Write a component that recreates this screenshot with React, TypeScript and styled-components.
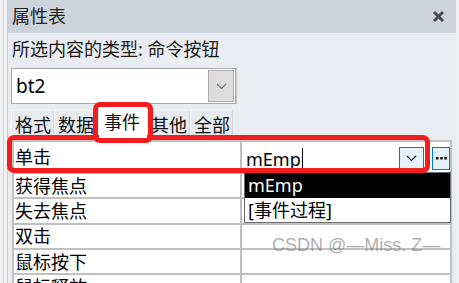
import React from "react";
import styled, { createGlobalStyle, css } from "styled-components";

const GlobalStyle = createGlobalStyle`
  html, body {
    margin: 0;
    padding: 0;
  }
  body {
    width: 459px;
    height: 283px;
    overflow: hidden;
    background: #eef0f3;
    font-family: "Noto Sans", "Noto Sans CJK SC", sans-serif;
    color: #111;
  }
`;

const tabs = ["格式", "数据", "事件", "其他", "全部"];
const events = ["获得焦点", "失去焦点", "双击", "鼠标按下", "鼠标释放"];

const Chevron: React.FC<{ color: string }> = ({ color }) => (
  <svg width="11" height="7" viewBox="0 0 11 7">
    <polyline points="1,1 5.5,5.5 10,1" fill="none" stroke={color} strokeWidth="1.2" />
  </svg>
);

const CloseIcon = () => (
  <svg width="13" height="13" viewBox="0 0 13 13">
    <path d="M2 2 L11 11 M11 2 L2 11" stroke="#4b4b4b" strokeWidth="3" />
  </svg>
);

const Dots = () => (
  <svg width="11" height="3" viewBox="0 0 11 3">
    <rect x="0" y="0" width="2.5" height="2.5" fill="#111" />
    <rect x="4.2" y="0" width="2.5" height="2.5" fill="#111" />
    <rect x="8.4" y="0" width="2.5" height="2.5" fill="#111" />
  </svg>
);

const App = () => {
  return (
    <>
      <GlobalStyle />
      <StyledWindow>
        <StyledEdge />
        <StyledPanel>
          <StyledTitleBar>
            <StyledTitle>属性表</StyledTitle>
            <CloseIcon />
          </StyledTitleBar>
          <StyledBody>
            <StyledTypeLabel>所选内容的类型: 命令按钮</StyledTypeLabel>
            <StyledCombo>
              <StyledComboText>bt2</StyledComboText>
              <StyledComboButton>
                <Chevron color="#707070" />
              </StyledComboButton>
            </StyledCombo>
            <StyledTabs>
              {tabs.map((t) => (
                <StyledTab key={t} $active={t === "事件"}>
                  {t}
                </StyledTab>
              ))}
            </StyledTabs>
            <StyledGrid>
              <StyledRow $selected>
                <StyledName>单击</StyledName>
                <StyledValue $editing>
                  <StyledInput>
                    mEmp
                    <StyledCaret />
                  </StyledInput>
                  <StyledDropButton>
                    <Chevron color="#1a1a1a" />
                  </StyledDropButton>
                  <StyledBuildButton>
                    <Dots />
                  </StyledBuildButton>
                  <StyledList>
                    <StyledOption $active>mEmp</StyledOption>
                    <StyledOption>[事件过程]</StyledOption>
                  </StyledList>
                </StyledValue>
              </StyledRow>
              {events.map((e) => (
                <StyledRow key={e}>
                  <StyledName>{e}</StyledName>
                  <StyledValue />
                </StyledRow>
              ))}
            </StyledGrid>
            <StyledWatermark>CSDN @—Miss. Z—</StyledWatermark>
          </StyledBody>
        </StyledPanel>
      </StyledWindow>
    </>
  );
};

const StyledWindow = styled.div`
  display: flex;
  flex-direction: row;
  width: 459px;
  height: 283px;
`;

const StyledEdge = styled.div`
  width: 8px;
  flex-shrink: 0;
  background: #f1f2f3;
  box-shadow: inset -1px 0 #c6c8cb, inset 3px 0 #f1f2f3, inset 4px 0 #d0d2d5;
`;

const StyledPanel = styled.div`
  display: flex;
  flex-direction: column;
  width: 448px;
  background: #e9ecf0;
`;

const StyledTitleBar = styled.div`
  display: flex;
  flex-direction: row;
  justify-content: space-between;
  align-items: center;
  height: 33px;
  padding: 0 11px 0 4px;
  background: #cdd3db;
`;

const StyledTitle = styled.span`
  font-size: 18px;
  line-height: 33px;
  color: #222;
`;

const StyledBody = styled.div`
  position: relative;
  display: flex;
  flex-direction: column;
  padding-top: 3px;
`;

const StyledTypeLabel = styled.div`
  height: 26px;
  padding-left: 4px;
  font-size: 18px;
  line-height: 26px;
  color: #1a1a1a;
`;

const StyledCombo = styled.div`
  display: flex;
  flex-direction: row;
  align-items: center;
  box-sizing: border-box;
  width: 225px;
  height: 36px;
  margin: 6px 0 0 3px;
  padding: 1px 1px 1px 0;
  background: #fff;
  border: 1px solid #a9a9a9;
  box-shadow: 1px 0 #c9c9c9;
`;

const StyledComboText = styled.span`
  flex: 1;
  padding-left: 4px;
  font-size: 19px;
  line-height: 32px;
  color: #000;
`;

const StyledComboButton = styled.div`
  display: flex;
  align-items: center;
  justify-content: center;
  box-sizing: border-box;
  width: 26px;
  height: 32px;
  background: #dddddd;
  border: 1px solid #adadad;
`;

const StyledTabs = styled.div`
  display: flex;
  flex-direction: row;
  align-items: flex-end;
  height: 31px;
  margin: 3px 0 0 3px;
`;

const StyledTab = styled.div<{ $active?: boolean }>`
  position: relative;
  box-sizing: border-box;
  width: 43px;
  height: 28px;
  padding: 0 4px 0 3px;
  font-size: 18px;
  line-height: 28px;
  white-space: nowrap;
  color: #111;
  background: #e7eaee;
  border-left: 1px solid #f6f7f9;
  border-right: 1px solid #d3d6db;
  border-top: 1px solid #f3f4f6;

  ${({ $active }) =>
    $active &&
    css`
      z-index: 5;
      width: 48px;
      height: 31px;
      margin-left: 2px;
      padding: 0 5px;
      line-height: 31px;
      background: #fff;
      border: none;

      &::after {
        content: "";
        position: absolute;
        top: -5px;
        left: -6px;
        right: -6px;
        bottom: -5px;
        border: 5px solid #f41d1d;
        border-radius: 7px;
      }
    `}
`;

const StyledGrid = styled.div`
  display: flex;
  flex-direction: column;
  gap: 2px;
  width: 440px;
  box-sizing: border-box;
  margin: 2px 0 0 4px;
  padding: 2px;
  background: #c0c0c0;
`;

const StyledRow = styled.div<{ $selected?: boolean }>`
  position: relative;
  display: grid;
  grid-template-columns: 226px 208px;
  gap: 2px;
  height: 23.3px;
  flex-shrink: 0;

  ${({ $selected }) =>
    $selected &&
    css`
      z-index: 4;
      height: 30px;

      &::after {
        content: "";
        position: absolute;
        top: -7px;
        left: -7px;
        width: 423px;
        bottom: -1px;
        border: 5px solid #f41d1d;
        border-radius: 7px;
        box-sizing: border-box;
        pointer-events: none;
      }
    `}
`;

const StyledName = styled.div`
  display: flex;
  align-items: center;
  padding-left: 1px;
  background: #fff;
  font-size: 18px;
  line-height: 22px;
  color: #000;
  white-space: nowrap;
  overflow: hidden;
`;

const StyledValue = styled.div<{ $editing?: boolean }>`
  position: relative;
  display: flex;
  flex-direction: row;
  align-items: flex-end;
  background: #fff;

  ${({ $editing }) =>
    $editing &&
    css`
      padding: 5px 0 2px 0;
    `}
`;

const StyledInput = styled.div`
  display: flex;
  align-items: center;
  width: 157px;
  height: 23px;
  padding-left: 4px;
  box-sizing: border-box;
  font-size: 18px;
  color: #000;
`;

const StyledCaret = styled.span`
  display: inline-block;
  width: 1px;
  height: 22px;
  margin-left: 1px;
  background: #000;
`;

const StyledDropButton = styled.div`
  display: flex;
  align-items: center;
  justify-content: center;
  box-sizing: border-box;
  width: 25px;
  height: 23px;
  background: #e5f1fb;
  border: 1px solid #0078d7;
`;

const StyledBuildButton = styled.div`
  display: flex;
  align-items: center;
  justify-content: center;
  box-sizing: border-box;
  width: 18px;
  height: 23px;
  margin-left: 8px;
  background: #e5f1fb;
  border: 1px solid #0078d7;
`;

const StyledList = styled.div`
  position: absolute;
  top: 100%;
  left: 2px;
  width: 207px;
  box-sizing: border-box;
  border: 1px solid #6b6b6b;
  background: #fff;
`;

const StyledOption = styled.div<{ $active?: boolean }>`
  height: 24.5px;
  padding-left: 3px;
  font-size: 18px;
  line-height: 24px;
  color: ${({ $active }) => ($active ? "#fff" : "#000")};
  background: ${({ $active }) => ($active ? "#000" : "#fff")};
`;

const StyledWatermark = styled.div`
  position: absolute;
  left: 264px;
  top: 201px;
  font-family: "Liberation Sans", "Noto Sans CJK SC", sans-serif;
  font-size: 18px;
  line-height: 22px;
  color: rgba(120, 120, 120, 0.6);
  white-space: nowrap;
  z-index: 6;
`;

export default App;
